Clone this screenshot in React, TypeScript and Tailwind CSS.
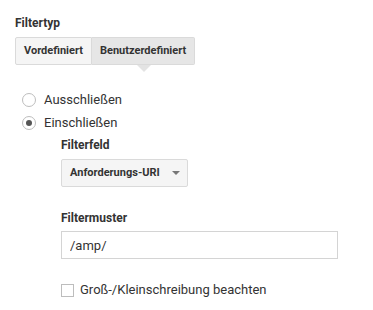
import { useState } from "react";

const FilterForm = () => {
  const [filterType, setFilterType] = useState<"predefined" | "custom">("custom");
  const [mode, setMode] = useState<"exclude" | "include">("include");
  const [pattern, setPattern] = useState("/amp/");
  const [caseSensitive, setCaseSensitive] = useState(false);

  return (
    <div className="min-h-[310px] w-[373px] bg-white pl-[15px] pt-[15px] font-['Roboto',sans-serif] text-[#333]">
      {/* filter type */}
      <div className="h-4 text-[12px] font-bold leading-4 text-[#333]">Filtertyp</div>
      <div className="mt-[6px] flex w-fit">
        <button
          onClick={() => setFilterType("predefined")}
          className={`h-[28px] rounded-l-[2px] border border-[#dadada] px-[8px] text-[11px] font-bold text-[#333] ${
            filterType === "predefined" ? "bg-[#e6e6e6]" : "bg-[#f5f5f5]"
          }`}
        >
          Vordefiniert
        </button>
        <div className="relative">
          <button
            onClick={() => setFilterType("custom")}
            className={`h-[28px] rounded-r-[2px] border border-l-0 border-[#dadada] px-[8px] text-[11px] font-bold text-[#333] ${
              filterType === "custom" ? "bg-[#e6e6e6]" : "bg-[#f5f5f5]"
            }`}
          >
            Benutzerdefiniert
          </button>
          {filterType === "custom" && (
            <div className="absolute left-1/2 top-full h-0 w-0 -translate-x-1/2 border-x-[7px] border-t-[7px] border-x-transparent border-t-[#e3e3e3]" />
          )}
        </div>
      </div>

      {/* radios */}
      <div className="mt-[23px] pl-[7px]">
        {[
          { key: "exclude", label: "Ausschließen" },
          { key: "include", label: "Einschließen" },
        ].map((r) => (
          <label key={r.key} className="flex h-[23px] cursor-pointer items-center gap-2 text-[13px] text-[#333]">
            <span className="flex h-[14px] w-[14px] items-center justify-center rounded-full border border-[#bdbdbd] bg-white">
              {mode === r.key && <span className="h-[6px] w-[6px] rounded-full bg-[#555]" />}
            </span>
            <input
              type="radio"
              className="hidden"
              checked={mode === r.key}
              onChange={() => setMode(r.key as "exclude" | "include")}
            />
            {r.label}
          </label>
        ))}
      </div>

      {/* filter field + pattern */}
      <div className="ml-[46px]">
        <div className="mt-[3px] h-4 text-[12px] font-bold leading-4">Filterfeld</div>
        <button className="mt-[6px] flex h-[28px] w-[127px] items-center justify-between rounded-[2px] border border-[#dadada] bg-[#f5f5f5] pl-[8px] pr-[7px] text-[11px] font-bold text-[#333]">
          Anforderungs-URI
          <svg width="8" height="4" viewBox="0 0 8 4">
            <path d="M0 0h8L4 4z" fill="#777" />
          </svg>
        </button>

        <div className="mt-[23px] h-4 text-[12px] font-bold leading-4">Filtermuster</div>
        <input
          value={pattern}
          onChange={(e) => setPattern(e.target.value)}
          className="mt-[5px] block h-[28px] w-[277px] border border-[#d4d4d4] px-[8px] text-[13px] text-[#333] outline-none"
        />

        <label className="mt-[21px] flex cursor-pointer items-center gap-[6px] text-[13px] text-[#333]">
          <input
            type="checkbox"
            className="hidden"
            checked={caseSensitive}
            onChange={() => setCaseSensitive(!caseSensitive)}
          />
          <span className="flex h-[13px] w-[13px] items-center justify-center border border-[#bdbdbd] bg-white text-[10px] leading-none">
            {caseSensitive ? "✓" : ""}
          </span>
          Groß-/Kleinschreibung beachten
        </label>
      </div>
    </div>
  );
};

export default function App() {
  return <FilterForm />;
}
